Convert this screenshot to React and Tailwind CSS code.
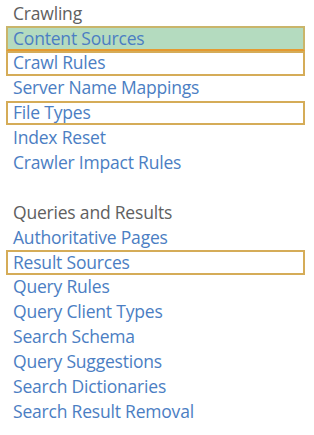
import React from "react";

const crawling = [
  { label: "Content Sources", mark: "green" },
  { label: "Crawl Rules", mark: "box" },
  { label: "Server Name Mappings" },
  { label: "File Types", mark: "box" },
  { label: "Index Reset" },
  { label: "Crawler Impact Rules" },
];

const queries = [
  { label: "Authoritative Pages" },
  { label: "Result Sources", mark: "box" },
  { label: "Query Rules" },
  { label: "Query Client Types" },
  { label: "Search Schema" },
  { label: "Query Suggestions" },
  { label: "Search Dictionaries" },
  { label: "Search Result Removal" },
];

function Row({ item }) {
  // boxed rows get the highlight border, the first one is also filled
  let cls = "border-2 border-transparent";
  if (item.mark === "green")
    cls = "border-2 border-[#c9b56a] border-b-[#e59a30] bg-[#b4dbbf]";
  if (item.mark === "box") cls = "border-2 border-[#d5ac58]";
  return (
    <div className={`h-[24.9px] flex items-center pl-[5px] ${cls}`}>
      <span className="text-[#4b7ec3]">{item.label}</span>
    </div>
  );
}

export default function App() {
  return (
    <div
      className="w-[314px] h-[435px] bg-white pl-[6px] pr-[9px] pt-[1px] text-[17.5px] leading-none tracking-[-0.2px]"
      style={{ fontFamily: '"Open Sans", "Noto Sans", sans-serif' }}
    >
      <div className="flex flex-col">
        <div className="h-[24.9px] flex items-center pl-[7px] text-[#606060]">Crawling</div>
        {crawling.map((item) => (
          <Row key={item.label} item={item} />
        ))}
        <div className="h-[24.9px]" />
        <div className="h-[24.9px] flex items-center pl-[7px] text-[#606060]">Queries and Results</div>
        {queries.map((item) => (
          <Row key={item.label} item={item} />
        ))}
      </div>
    </div>
  );
}
